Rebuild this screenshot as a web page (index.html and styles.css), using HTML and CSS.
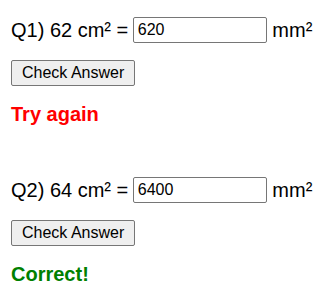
FILE: index.html
```html
<!doctype html>
<html lang="en">
<head>
    <meta charset="UTF-8">
    <title>Area conversion</title>
    <link rel="stylesheet" href="styles.css">
</head>
<body>
<div class="quiz">
    <div class="question">
        <div class="line">Q1) 62 cm² = <input type="text" class="answer" value="620"> mm²</div>
        <button class="check">Check Answer</button>
        <div class="result wrong">Try again</div>
    </div>
    <div class="question">
        <div class="line">Q2) 64 cm² = <input type="text" class="answer" value="6400"> mm²</div>
        <button class="check">Check Answer</button>
        <div class="result right">Correct!</div>
    </div>
</div>
</body>
</html>
```

FILE: styles.css
```css
* {
    margin: 0;
    padding: 0;
    box-sizing: border-box;
}

body {
    font-family: "Liberation Sans", Arial, sans-serif;
    color: #000;
    background: #fff;
}

.quiz {
    padding: 17px 0 0 11px;
}

.question {
    margin-bottom: 51px;
}

.question:last-child {
    margin-bottom: 0;
}

.line {
    font-size: 20px;
    line-height: 26px;
    height: 26px;
    white-space: nowrap;
}

.answer {
    width: 134px;
    height: 26px;
    margin-left: -1px;
    padding: 1px 4px;
    font-family: "Liberation Sans", Arial, sans-serif;
    font-size: 16px;
    border: 1px solid #767676;
    border-radius: 2px;
    vertical-align: top;
}

.check {
    display: block;
    margin-top: 17px;
    height: 26px;
    padding: 0 10px;
    font-family: "Liberation Sans", Arial, sans-serif;
    font-size: 16px;
    background: #efefef;
    border: 1px solid #767676;
    border-radius: 2px;
    color: #000;
}

.result {
    margin-top: 16px;
    font-size: 20px;
    font-weight: bold;
    line-height: 24px;
}

.wrong {
    color: #f00;
}

.right {
    color: #008000;
}
```
